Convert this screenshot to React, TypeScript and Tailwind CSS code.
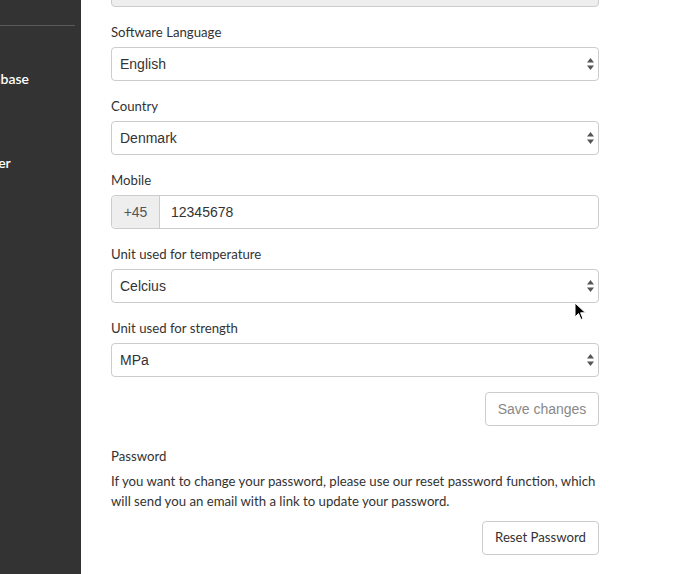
import React from "react";

const labelFont = { fontFamily: "Lato, 'Open Sans', sans-serif" };

function Arrows() {
  return (
    <svg width="7" height="12" viewBox="0 0 7 12" className="shrink-0">
      <path d="M3.5 0 L7 4.5 L0 4.5 Z" fill="#555" />
      <path d="M0 7.5 L7 7.5 L3.5 12 Z" fill="#555" />
    </svg>
  );
}

function SelectBox({ value }: { value: string }) {
  return (
    <div className="flex h-[34px] items-center justify-between rounded-[4px] border border-[#ccc] bg-white pl-[8px] pr-[4px] text-[14px] text-[#333] font-['Liberation_Sans',Arial,sans-serif]">
      <span>{value}</span>
      <Arrows />
    </div>
  );
}

function Field({ label, children }: { label: string; children: React.ReactNode }) {
  return (
    <div className="mb-[15px]">
      <div className="mb-[5px] h-[20px] text-[13.2px] leading-[20px] text-[#333]" style={labelFont}>
        {label}
      </div>
      {children}
    </div>
  );
}

export default function App() {
  return (
    <div className="relative flex h-[574px] w-[678px] overflow-hidden bg-white">
      <aside className="w-[81px] shrink-0 overflow-hidden bg-[#333]">
        <div className="mt-[25px] h-px w-[75px] bg-[#5a5a5a]" />
        <div className="mt-[43px] whitespace-nowrap text-[14px] font-semibold leading-[20px] text-white -ml-[29px]" style={labelFont}>
          Database
        </div>
        <div className="mt-[64px] whitespace-nowrap text-[14px] font-semibold leading-[20px] text-white -ml-[18px]" style={labelFont}>
          User
        </div>
      </aside>
      <main className="w-[488px] shrink-0 ml-[30px]">
        <div className="-mt-[27px] mb-[15px] h-[34px] rounded-[4px] border border-[#ccc] bg-[#eee]" />
        <Field label="Software Language">
          <SelectBox value="English" />
        </Field>
        <Field label="Country">
          <SelectBox value="Denmark" />
        </Field>
        <Field label="Mobile">
          <div className="flex h-[34px] rounded-[4px] border border-[#ccc] text-[14px] text-[#333] font-['Liberation_Sans',Arial,sans-serif]">
            <div className="flex w-[48px] items-center justify-center rounded-l-[4px] border-r border-[#ccc] bg-[#eee] text-[#555]">
              +45
            </div>
            <div className="flex items-center pl-[11px]">12345678</div>
          </div>
        </Field>
        <Field label="Unit used for temperature">
          <SelectBox value="Celcius" />
        </Field>
        <Field label="Unit used for strength">
          <SelectBox value="MPa" />
        </Field>
        <div className="mt-[1px] flex justify-end">
          <button className="h-[34px] w-[114px] rounded-[4px] border border-[#ccc] bg-white text-[14px] text-[#888] font-['Liberation_Sans',Arial,sans-serif]">
            Save changes
          </button>
        </div>
        <div className="mt-[20px] mb-[5px] h-[20px] text-[13.2px] leading-[20px] text-[#333]" style={labelFont}>
          Password
        </div>
        <p className="text-[13.2px] leading-[20px] text-[#333]" style={labelFont}>
          If you want to change your password, please use our reset password function, which will send you an email with a link to update your password.
        </p>
        <div className="mt-[10px] flex justify-end">
          <button className="h-[34px] w-[117px] rounded-[4px] border border-[#ccc] bg-white text-[13.2px] text-[#333]" style={labelFont}>
            Reset Password
          </button>
        </div>
      </main>
      <svg className="absolute left-[574px] top-[302px]" width="13" height="20" viewBox="0 0 13 20">
        <path d="M1 1 L1 15 L4.5 11.5 L7 17.5 L9 16.6 L6.6 10.8 L11.5 10.8 Z" fill="#000" stroke="#fff" strokeWidth="1" />
      </svg>
    </div>
  );
}
